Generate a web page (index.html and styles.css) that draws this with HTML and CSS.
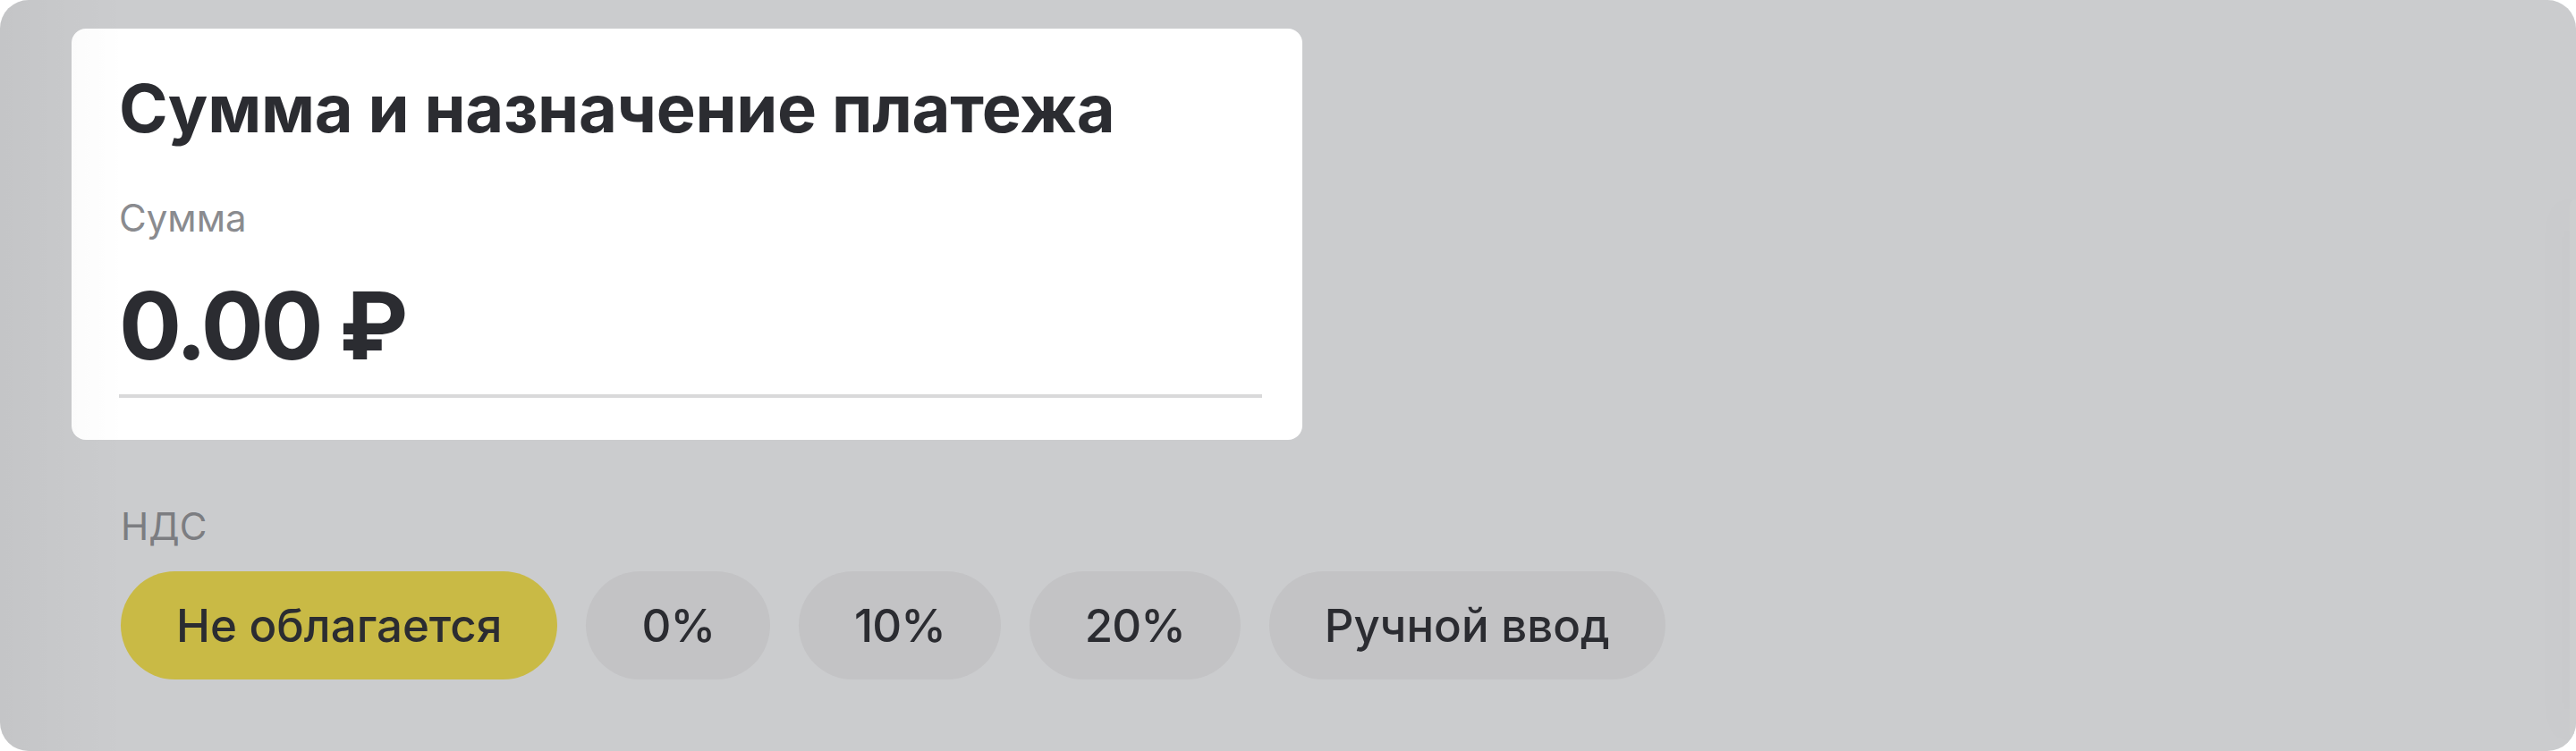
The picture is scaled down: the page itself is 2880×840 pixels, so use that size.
FILE: index.html
```html
<!DOCTYPE html>
<html lang="ru">
<head>
<meta charset="utf-8">
<title>Сумма и назначение платежа</title>
<link rel="stylesheet" href="styles.css">
</head>
<body>
<div class="panel">
  <div class="left-shade"></div>
  <div class="side-sheet"></div>
  <section class="card">
    <h1 class="title">Сумма и назначение платежа</h1>
    <div class="label">Сумма</div>
    <div class="amount">0.00 ₽</div>
    <div class="divider"></div>
  </section>
  <div class="vat">
    <div class="label vat-label">НДС</div>
    <div class="chips">
      <button class="chip chip-active">Не облагается</button>
      <button class="chip chip-num">0%</button>
      <button class="chip chip-num">10%</button>
      <button class="chip chip-num">20%</button>
      <button class="chip">Ручной ввод</button>
    </div>
  </div>
</div>
</body>
</html>
```
FILE: styles.css
```css
html, body {
  margin: 0;
  padding: 0;
  background: #ffffff;
}
body {
  width: 2880px;
  height: 840px;
  overflow: hidden;
  font-family: Inter, "Noto Sans", "Liberation Sans", sans-serif;
  color: #2b2c31;
}
.panel {
  position: relative;
  box-sizing: border-box;
  width: 2880px;
  height: 840px;
  border-radius: 32px;
  background: #cbccce;
  padding: 32px 0 0 80px;
  overflow: hidden;
}
.left-shade {
  position: absolute;
  left: 0;
  top: 0;
  bottom: 0;
  width: 140px;
  background: linear-gradient(to right, rgba(0,0,0,0.035), rgba(0,0,0,0));
  pointer-events: none;
  z-index: 2;
}
.side-sheet {
  position: absolute;
  right: 0;
  top: 223px;
  bottom: 12px;
  width: 7px;
  border-radius: 16px 0 0 16px;
  background: #cdcecf;
  box-shadow: -6px 0 40px rgba(0,0,0,0.06);
}
.card {
  box-sizing: border-box;
  width: 1376px;
  height: 460px;
  background: #ffffff;
  border-radius: 16px;
  padding: 45px 45px 0 53px;
  display: flex;
  flex-direction: column;
}
.title {
  margin: 0;
  font-size: 74px;
  line-height: 88px;
  font-weight: 700;
  letter-spacing: -0.3px;
  color: #2b2c31;
}
.label {
  font-size: 42px;
  line-height: 50px;
  font-weight: 400;
  color: #8a8b8f;
}
.card .label {
  margin-top: 54px;
}
.amount {
  margin-top: 33px;
  font-size: 104px;
  line-height: 125px;
  font-weight: 700;
  letter-spacing: -3.5px;
  color: #2b2c31;
}
.divider {
  margin-top: 14px;
  height: 4px;
  background: #d9d9da;
}
.vat {
  padding-left: 55px;
  margin-top: 72px;
}
.vat-label {
  color: #7c7d81;
}
.chips {
  margin-top: 25px;
  display: flex;
  gap: 32px;
}
.chip {
  height: 121px;
  border: 0;
  border-radius: 61px;
  padding: 0 62px;
  background: #c3c3c5;
  font-family: inherit;
  font-size: 51px;
  font-weight: 500;
  color: #2b2c31;
  cursor: pointer;
}
.chip-num {
  letter-spacing: -1px;
}
.chip-active {
  background: #c9ba45;
}
```
